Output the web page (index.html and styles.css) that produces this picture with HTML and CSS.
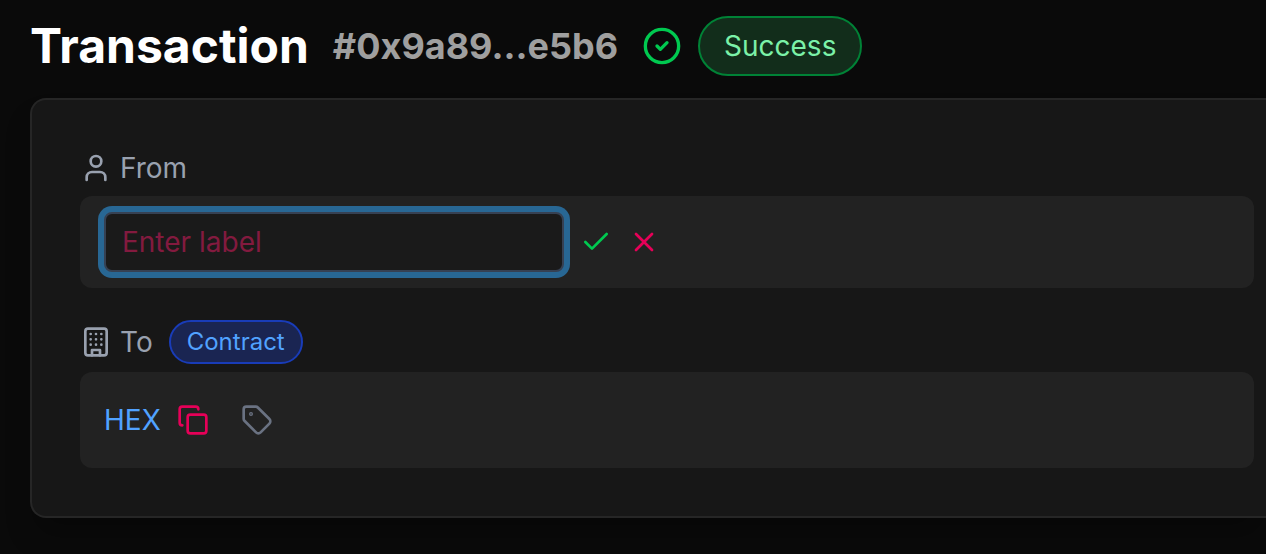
FILE: index.html
```html
<!DOCTYPE html>
<html lang="en">
<head>
  <meta charset="UTF-8" />
  <title>Transaction Details</title>
  <meta name="viewport" content="width=device-width, initial-scale=1" />
  <link rel="stylesheet" href="styles.css">
</head>
<body>

<header class="tx-header">
  <h1>Transaction</h1>
  <span class="tx-hash">#0x9a89...e5b6</span>
  <div class="tx-status">
    <svg class="icon status-icon" viewBox="0 0 24 24" aria-hidden="true">
      <circle cx="12" cy="12" r="10" />
      <path d="m9 12 2 2 4-4" />
    </svg>
    <span class="badge badge-success">Success</span>
  </div>
</header>

<main class="card">
  <section class="party">
    <div class="party-head">
      <svg class="icon" viewBox="0 0 24 24" aria-hidden="true">
        <path d="M19 21v-2a4 4 0 0 0-4-4H9a4 4 0 0 0-4 4v2" />
        <circle cx="12" cy="7" r="4" />
      </svg>
      <label for="fromLabel">From</label>
    </div>
    <form class="address-box editing">
      <input class="label-input" type="text" id="fromLabel" placeholder="Enter label">
      <button class="icon-btn save" type="submit" aria-label="Save label">
        <svg class="icon" viewBox="0 0 24 24" aria-hidden="true">
          <path d="M20 6 9 17l-5-5" />
        </svg>
      </button>
      <button class="icon-btn cancel" type="button" aria-label="Cancel">
        <svg class="icon" viewBox="0 0 24 24" aria-hidden="true">
          <path d="M18 6 6 18" />
          <path d="m6 6 12 12" />
        </svg>
      </button>
    </form>
  </section>

  <section class="party">
    <div class="party-head">
      <svg class="icon" viewBox="0 0 24 24" aria-hidden="true">
        <rect x="4" y="2" width="16" height="20" rx="2" />
        <path d="M9 22v-4h6v4" />
        <path d="M8 6h.01M12 6h.01M16 6h.01" />
        <path d="M8 10h.01M12 10h.01M16 10h.01" />
        <path d="M8 14h.01M12 14h.01M16 14h.01" />
      </svg>
      <span>To</span>
      <span class="badge badge-contract">Contract</span>
    </div>
    <div class="address-box">
      <a class="address-link" href="#">HEX</a>
      <button class="icon-btn copy" type="button" aria-label="Copy address">
        <svg class="icon" viewBox="0 0 24 24" aria-hidden="true">
          <rect x="8" y="8" width="14" height="14" rx="2" />
          <path d="M4 16c-1.1 0-2-.9-2-2V4c0-1.1.9-2 2-2h10c1.1 0 2 .9 2 2" />
        </svg>
      </button>
      <button class="icon-btn tag" type="button" aria-label="Edit label">
        <svg class="icon" viewBox="0 0 24 24" aria-hidden="true">
          <path d="M12.586 2.586A2 2 0 0 0 11.172 2H4a2 2 0 0 0-2 2v7.172a2 2 0 0 0 .586 1.414l8.704 8.704a2.426 2.426 0 0 0 3.42 0l6.58-6.58a2.426 2.426 0 0 0 0-3.42z" />
          <circle cx="7.5" cy="7.5" r=".5" />
        </svg>
      </button>
    </div>
  </section>
</main>

</body>
</html>
```
FILE: styles.css
```css
* {
  box-sizing: border-box;
}

body {
  font-family: Inter, sans-serif;
  font-size: 28px;
  line-height: 40px;
  background: #0a0a0a;
  color: #99a1af;
  margin: 0;
  padding: 16px 0 36px 30px;
}

.tx-header {
  display: flex;
  align-items: center;
  gap: 24px;
  margin-bottom: 22px;
}

.tx-header h1 {
  margin: 0;
  color: white;
  font-size: 48px;
  font-weight: 700;
}

.tx-hash {
  color: #9f9f9f;
  font-size: 36px;
  font-weight: 700;
}

.tx-status {
  display: flex;
  align-items: center;
  gap: 16px;
}

.icon {
  display: block;
  flex: none;
  width: 32px;
  height: 32px;
  fill: none;
  stroke: currentColor;
  stroke-width: 2;
  stroke-linecap: round;
  stroke-linejoin: round;
}

.status-icon {
  width: 40px;
  height: 40px;
  color: #00c950;
}

.badge {
  border: 2px solid;
  border-radius: 30px;
}

.badge-success {
  padding: 8px 24px;
  background: #122d1b;
  border-color: #008236;
  color: #7bf1a8;
}

.badge-contract {
  margin-left: 8px;
  padding: 0 16px;
  background: #1a2552;
  border-color: #193cb8;
  color: #51a2ff;
  font-size: 24px;
}

.card {
  display: flex;
  flex-direction: column;
  gap: 32px;
  padding: 48px 12px 48px 48px;
  background: #171717;
  border: 2px solid #262626;
  border-right: 0;
  border-radius: 16px 0 0 16px;
  box-shadow: 0 20px 30px -6px rgba(0,0,0,0.3);
}

.party-head {
  display: flex;
  align-items: center;
  gap: 8px;
  margin-bottom: 8px;
}

.address-box {
  display: flex;
  align-items: center;
  gap: 16px;
  padding: 28px 24px;
  background: #222;
  border-radius: 12px;
}

.editing {
  padding: 16px 24px;
}

.label-input {
  width: 460px;
  height: 60px;
  padding: 0 16px;
  font: inherit;
  color: white;
  background: #1a1a1a;
  border: 2px solid #364153;
  border-radius: 8px;
  outline: none;
  box-shadow: 0 0 0 6px #286794;
}

.label-input::placeholder {
  color: #831a3f;
  opacity: 1;
}

.icon-btn {
  padding: 0;
  background: none;
  border: 0;
  cursor: pointer;
}

.save {
  color: #00c950;
}

.cancel,
.copy {
  color: #e60058;
}

.tag {
  margin-left: 16px;
  color: #6a7282;
}

.address-link {
  color: #51a2ff;
  text-decoration: none;
}
```
